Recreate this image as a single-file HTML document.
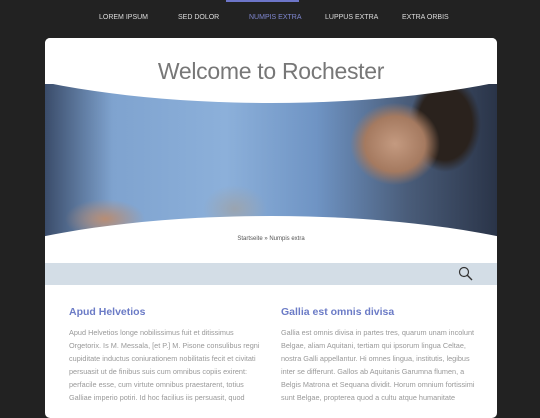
<!DOCTYPE html>
<html><head><style>
body{margin:0;width:540px;height:405px;background:#222;overflow:hidden;font-family:"Liberation Sans",sans-serif;position:relative}
.bar{position:absolute;left:226px;top:0;width:73px;height:2px;background:#6d75c8}
.nav{position:absolute;top:14px;font-size:7px;color:#ddd;letter-spacing:0}
.card{position:absolute;left:45px;top:38px;width:452px;height:380px;background:#fff;border-radius:5px;overflow:hidden}
h1{position:absolute;top:20px;left:0;width:452px;text-align:center;margin:0;font-size:23px;color:#777;font-family:"Liberation Sans",sans-serif;font-weight:normal;letter-spacing:-0.3px}
.photo{position:absolute;left:0;top:46px;width:452px;height:155px;background:
radial-gradient(ellipse 60px 55px at 350px 60px,#c49a80 0,#a57a60 50%,transparent 75%),
radial-gradient(ellipse 45px 60px at 400px 40px,#2a221d 0,#2a221d 60%,transparent 80%),
radial-gradient(ellipse 50px 25px at 60px 135px,#b88d74 0,transparent 80%),
radial-gradient(ellipse 40px 30px at 190px 125px,#9aa4b0 0,transparent 80%),
linear-gradient(90deg,#3a4c6a 0,#7fa3cf 15%,#8cb0da 40%,#6f94c4 60%,#4a5d7a 80%,#2a3448 100%)}
.topcurve{position:absolute;left:-150px;top:-140px;width:752px;height:205px;background:#fff;border-radius:50%}
.botcurve{position:absolute;left:-150px;top:178px;width:752px;height:200px;background:#fff;border-radius:50%}
.crumb{position:absolute;top:198px;width:452px;text-align:center;font-size:6px;color:#555}
.search{position:absolute;left:0;top:225px;width:452px;height:22px;background:#d3dde6}
h2{position:absolute;margin:0;font-size:10.5px;color:#6b7bc6;font-weight:bold;top:268px}
p{position:absolute;margin:0;font-size:7.3px;line-height:13px;color:#999;top:288px;width:192px}
</style></head><body>
<div class="bar"></div>
<div class="nav" style="left:99px">LOREM IPSUM</div>
<div class="nav" style="left:178px">SED DOLOR</div>
<div class="nav" style="left:249px;color:#7f87d0">NUMPIS EXTRA</div>
<div class="nav" style="left:325px">LUPPUS EXTRA</div>
<div class="nav" style="left:402px">EXTRA ORBIS</div>
<div class="card">
<div class="photo"></div>
<div class="topcurve"></div>
<div class="botcurve"></div>
<h1>Welcome to Rochester</h1>
<div class="crumb">Startseite » Numpis extra</div>
<div class="search"><svg style="position:absolute;left:413px;top:3px" width="16" height="16" viewBox="0 0 16 16"><circle cx="6" cy="6" r="4.5" fill="none" stroke="#333" stroke-width="1.2"/><path d="M9.3 9.3L14 14" stroke="#333" stroke-width="1.4"/></svg></div>
<h2 style="left:24px">Apud Helvetios</h2>
<h2 style="left:236px">Gallia est omnis divisa</h2>
<p style="left:24px">Apud Helvetios longe nobilissimus fuit et ditissimus Orgetorix. Is M. Messala, [et P.] M. Pisone consulibus regni cupiditate inductus coniurationem nobilitatis fecit et civitati persuasit ut de finibus suis cum omnibus copiis exirent: perfacile esse, cum virtute omnibus praestarent, totius Galliae imperio potiri. Id hoc facilius iis persuasit, quod</p>
<p style="left:236px;width:200px">Gallia est omnis divisa in partes tres, quarum unam incolunt Belgae, aliam Aquitani, tertiam qui ipsorum lingua Celtae, nostra Galli appellantur. Hi omnes lingua, institutis, legibus inter se differunt. Gallos ab Aquitanis Garumna flumen, a Belgis Matrona et Sequana dividit. Horum omnium fortissimi sunt Belgae, propterea quod a cultu atque humanitate</p>
</div>
</body></html>
